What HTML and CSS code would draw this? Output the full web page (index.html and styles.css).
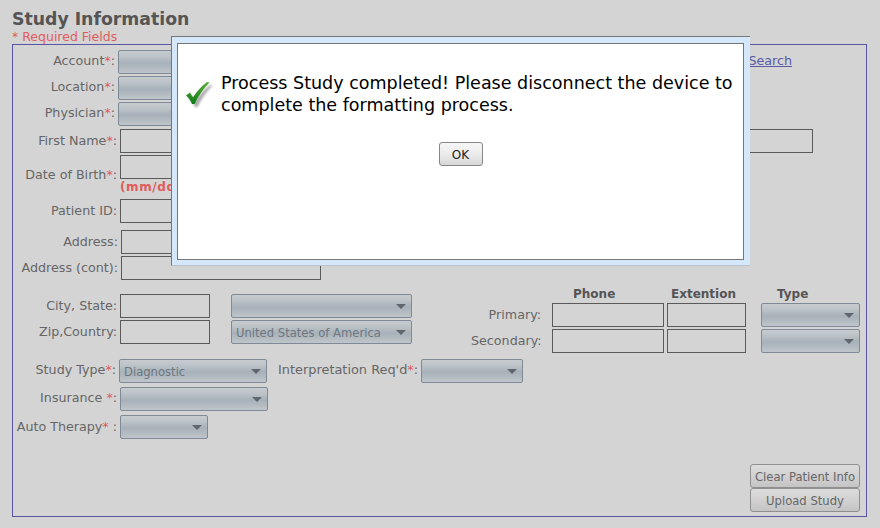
FILE: index.html
```html
<!DOCTYPE html>
<html lang="en">
<head>
<meta charset="utf-8">
<title>Study Information</title>
<link rel="stylesheet" href="styles.css">
</head>
<body>
<main class="page">
  <h1 class="title">Study Information</h1>
  <p class="required">* Required Fields</p>
  <form class="panel">
    <div class="row row-first">
      <label class="lbl up w102">Account<span class="req">*</span>:</label>
      <div class="select w-main"></div>
      <a class="search" href="#">Search</a>
    </div>
    <div class="row gap3">
      <label class="lbl up w102">Location<span class="req">*</span>:</label>
      <div class="select w-main"></div>
    </div>
    <div class="row gap3">
      <label class="lbl up w102">Physician<span class="req">*</span>:</label>
      <div class="select w-main"></div>
    </div>
    <div class="row gap4">
      <label class="lbl w104">First Name<span class="req">*</span>:</label>
      <input class="input w-name" type="text">
      <input class="input w-last" type="text">
    </div>
    <div class="row gap3 row-dob">
      <label class="lbl w104 lbl-dob">Date of Birth<span class="req">*</span>:</label>
      <div class="dob">
        <input class="input w-name" type="text">
        <div class="hint">(mm/dd/yyyy)</div>
      </div>
    </div>
    <div class="row gap3">
      <label class="lbl w104">Patient ID:</label>
      <input class="input w-name" type="text">
    </div>
    <div class="row gap8">
      <label class="lbl w105">Address:</label>
      <input class="input w-addr" type="text">
    </div>
    <div class="row gap3">
      <label class="lbl w105">Address (cont):</label>
      <input class="input w-addr" type="text">
    </div>

    <div class="contact">
      <div class="city">
        <div class="row">
          <label class="lbl w104">City, State:</label>
          <input class="input w-city" type="text">
          <div class="select w-state"></div>
        </div>
        <div class="row gap3">
          <label class="lbl w104">Zip,Country:</label>
          <input class="input w-city" type="text">
          <div class="select w-state"><span class="val">United States of America</span></div>
        </div>
      </div>
      <div class="phones">
        <div class="phone-head">
          <span class="head-phone">Phone</span>
          <span class="head-ext">Extention</span>
          <span class="head-type">Type</span>
        </div>
        <div class="row phone-row">
          <label class="lbl w-phone">Primary:</label>
          <input class="input w-num" type="text">
          <input class="input w-ext" type="text">
          <div class="select w-type"></div>
        </div>
        <div class="row gap3 phone-row">
          <label class="lbl w-phone">Secondary:</label>
          <input class="input w-num" type="text">
          <input class="input w-ext" type="text">
          <div class="select w-type"></div>
        </div>
      </div>
    </div>

    <div class="row row-study">
      <label class="lbl up w103">Study Type<span class="req">*</span>:</label>
      <div class="select w-study"><span class="val">Diagnostic</span></div>
      <label class="lbl-interp">Interpretation Req'd<span class="req">*</span>:</label>
      <div class="select w-interp"></div>
    </div>
    <div class="row gap5">
      <label class="lbl up w104">Insurance <span class="req">*</span>:</label>
      <div class="select w-study"></div>
    </div>
    <div class="row gap5">
      <label class="lbl w104">Auto Therapy<span class="req">*</span> :</label>
      <div class="select w-auto"></div>
    </div>

    <div class="actions">
      <button class="btn" type="button">Clear Patient Info</button>
      <button class="btn" type="button">Upload Study</button>
    </div>
  </form>
</main>

<div class="dialog" role="dialog">
  <div class="dialog-inner">
    <div class="dialog-msg">
      <svg class="check" width="30" height="30" viewBox="0 0 30 30" aria-hidden="true">
        <defs>
          <linearGradient id="g" x1="0" y1="0" x2="0" y2="1">
            <stop offset="0" stop-color="#5fae3c"/>
            <stop offset="1" stop-color="#0c7a14"/>
          </linearGradient>
          <filter id="b" x="-20%" y="-20%" width="140%" height="140%"><feGaussianBlur stdDeviation="1.1"/></filter>
        </defs>
        <path d="M3 16.5 L7 13.5 L10 18.5 C13 13.5 18 7.5 24 3 L26.5 3.5 C20 10 15 17.5 11.5 25 L9 25 C7.5 21.5 5.5 18.5 3 16.5 Z" fill="#888" opacity=".7" filter="url(#b)" transform="translate(2 2)"/>
        <path d="M2 15.5 L6 12.5 L9 17.5 C12 12.5 17 6.5 23 2 L25.5 2.5 C19 9 14 16.5 10.5 24 L8 24 C6.5 20.5 4.5 17.5 2 15.5 Z" fill="url(#g)"/>
      </svg>
      <p class="dialog-text">Process Study completed! Please disconnect the device to complete the formatting process.</p>
    </div>
    <div class="dialog-actions"><button class="btn btn-ok" type="button">OK</button></div>
  </div>
</div>
</body>
</html>
```
FILE: styles.css
```css
* { box-sizing: border-box; }
html, body { margin: 0; height: 100%; }
body {
  background: #d4d4d4;
  font-family: "DejaVu Sans", Verdana, sans-serif;
  font-size: 12.7px;
  color: #666;
  overflow: hidden;
}
.page { padding: 10px 13px 0 12px; }
.title { margin: 0; font-size: 17.3px; line-height: 19px; font-weight: bold; color: #555; }
.required { margin: 1px 0 0; font-size: 12.5px; line-height: 14px; color: #e05c5c; }
.panel {
  height: 473px;
  border: 1px solid #5757a6;
  padding: 5px 6px 4px 0;
  display: flex;
  flex-direction: column;
}
.row { display: flex; align-items: center; height: 23px; flex: none; }
.gap3 { margin-top: 3px; }
.gap4 { margin-top: 4px; }
.gap5 { margin-top: 5px; }
.gap8 { margin-top: 8px; }
.lbl { flex: none; text-align: right; margin-right: 3px; white-space: nowrap; color: #666; }
.up { margin-bottom: 2px; }
.w102 { width: 102px; }
.w103 { width: 103px; }
.w104 { width: 104px; }
.w105 { width: 105px; }
.req { color: #e05c5c; }

.input {
  display: block;
  flex: none;
  height: 24px;
  border: 1px solid #5a5a5a;
  background: transparent;
  padding: 0;
  margin: 0;
  border-radius: 0;
}
.w-name { width: 200px; }
.w-last { width: 274px; margin-left: 219px; }
.w-addr { width: 200px; }
.w-city { width: 90px; }
.w-num { width: 112px; }
.w-ext { width: 79px; margin-left: 3px; }

.select {
  position: relative;
  flex: none;
  height: 24px;
  border: 1px solid #7f8a96;
  border-radius: 2px;
  background: linear-gradient(#c6cbcf 0%, #bcc3c8 25%, #a7b1b9 55%, #b4bcc2 80%, #bfc6cb 100%);
  font-size: 11.6px;
  line-height: 24px;
  padding-left: 4px;
  color: #6f7780;
}
.select::after {
  content: "";
  position: absolute;
  right: 5px;
  top: 9px;
  border-left: 5px solid transparent;
  border-right: 5px solid transparent;
  border-top: 5px solid #5f666d;
}
.val { white-space: nowrap; }
.w-main { width: 200px; }
.w-state { width: 181px; margin-left: 21px; }
.w-type { width: 99px; margin-left: 15px; }
.w-study { width: 148px; }
.w-interp { width: 102px; }
.w-auto { width: 88px; }

.search { margin-left: auto; margin-right: 68px; margin-bottom: 2px; color: #5a5aa8; text-decoration: underline; }

.row-dob { height: 41px; align-items: flex-start; }
.lbl-dob { margin-top: 12px; }
.dob { flex: none; }
.hint { margin-top: 1px; font-weight: bold; color: #e05c5c; font-size: 12px; line-height: 15px; letter-spacing: .6px; white-space: nowrap; }

.contact { display: flex; margin-top: 8px; height: 66px; flex: none; }
.city { padding-top: 7px; flex: none; }
.phones { margin-left: 59px; flex: none; }
.phone-head { display: flex; height: 16px; font-size: 12px; font-weight: bold; color: #555; line-height: 14px; }
.head-phone { margin-left: 102px; width: 98px; }
.head-ext { width: 106px; }
.phone-row { height: 23px; }
.w-phone { width: 70px; margin-right: 11px; }

.row-study { margin-top: 6px; }
.lbl-interp { width: 140px; margin: 0 3px 2px 11px; font-size: 12.9px; white-space: nowrap; color: #666; }

.actions { margin-top: auto; display: flex; flex-direction: column; align-items: flex-end; }
.btn {
  width: 110px;
  height: 24px;
  padding: 1px 0 0;
  font: 11.6px "DejaVu Sans", Verdana, sans-serif;
  color: #666;
  border: 1px solid #8f8f8f;
  border-radius: 3px;
  background: linear-gradient(#dcdcdc, #d0d0d0 55%, #c4c4c4);
}

.dialog {
  position: absolute;
  left: 171px;
  top: 36px;
  width: 579px;
  height: 230px;
  background: #d5e7fb;
  border-top: 1px solid #777;
  border-left: 1px solid #777;
  border-bottom: 1px solid #b9c2cc;
  padding: 6px 6px 5px 5px;
}
.dialog-inner {
  height: 100%;
  background: #fff;
  border: 1px solid #777;
  padding: 28px 6px 0 6px;
}
.dialog-msg { display: flex; align-items: flex-start; }
.check { flex: none; margin: 8px 0 0 0; }
.dialog-text { margin: 0 0 0 7px; font-size: 17.53px; line-height: 22px; color: #000; }
.dialog-actions { display: flex; justify-content: center; margin-top: 26px; }
.btn-ok {
  width: 44px;
  font-size: 12px;
  color: #222;
  border-color: #888;
  background: linear-gradient(#f6f6f6, #ececec 50%, #d6d6d6);
}
```
